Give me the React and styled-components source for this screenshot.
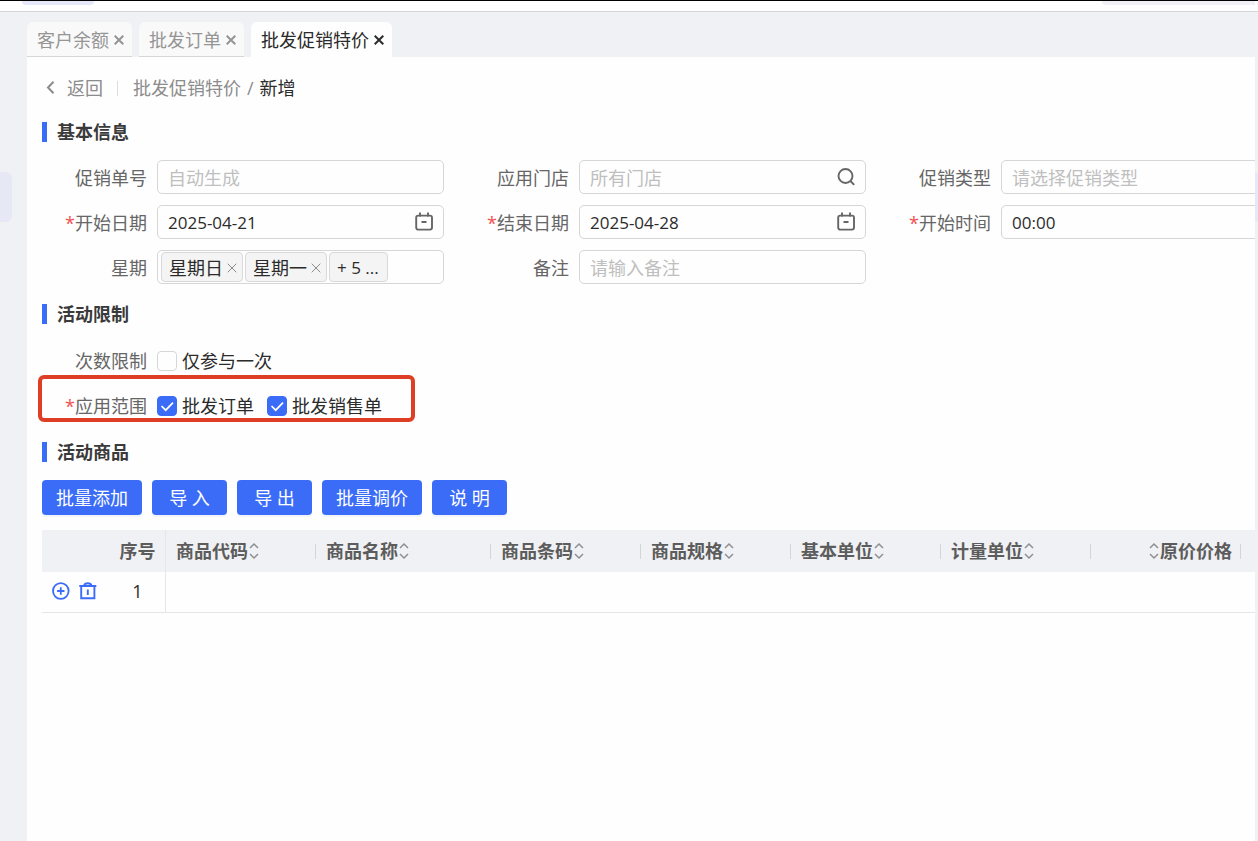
import React, { useState } from 'react';
import styled, { createGlobalStyle } from 'styled-components';

const GlobalStyle = createGlobalStyle`
    * {
        box-sizing: border-box;
    }
    body {
        margin: 0;
        overflow: hidden;
        background: #f0f1f4;
        color: #2b2b2b;
        font-family: 'Open Sans', 'Noto Sans CJK SC', sans-serif;
        font-size: 18px;
        line-height: 26px;
    }
    button, input, select {
        font: inherit;
        color: inherit;
    }
    svg {
        display: block;
        flex: none;
    }
`

const Page = styled.div`
    display: flex;
    flex-direction: column;
    height: 100vh;
`

const TopBar = styled.header`
    display: flex;
    justify-content: space-between;
    height: 12px;
    padding: 0 3px 0 22px;
    background: #fefefe;
    border-top: 1px solid #000;
    border-bottom: 1px solid #d5d6da;
`

const TopPill = styled.div`
    width: ${props => props.$width}px;
    height: 4px;
    background: ${props => props.$color};
    border-radius: ${props => props.$radius};
`

const Body = styled.div`
    display: flex;
    flex: 1;
    min-height: 0;
`

const Rail = styled.aside`
    flex: none;
    width: ${props => props.$width}px;
    padding-top: 160px;
`

const RailItem = styled.div`
    width: ${props => props.$width}px;
    height: 50px;
    background: #e6e8f6;
    border-radius: 0 6px 6px 0;
`

const Main = styled.main`
    display: flex;
    flex: 1;
    flex-direction: column;
    min-width: 0;
    overflow: hidden;
`

const Tabs = styled.nav`
    display: flex;
    gap: 7px;
    padding-top: 10px;
`

const Tab = styled.div`
    display: flex;
    align-items: center;
    gap: 5px;
    height: 35px;
    padding: 2px 8px 0 10px;
    border-radius: 6px 6px 0 0;
    border-bottom: 1px solid ${props => props.$active ? '#fefefe' : '#d5d6d9'};
    background: ${props => props.$active ? '#fefefe' : '#f9f9f9'};
    color: ${props => props.$active ? '#2b2b2b' : '#959595'};
`

const TabLink = styled.a`
    color: inherit;
    text-decoration: none;
`

const IconButton = styled.button`
    display: flex;
    padding: 0;
    border: none;
    background: none;
    color: ${props => props.$color || 'inherit'};
    cursor: pointer;
`

const Panel = styled.div`
    flex: 1;
    padding: 15px 0 0 15px;
    background: #fefefe;
`

const Breadcrumb = styled.nav`
    display: flex;
    align-items: center;
    height: 32px;
    color: #8c8c8c;
`

const BackLink = styled.a`
    display: flex;
    align-items: center;
    gap: 12px;
    padding: 0 14px 0 4px;
    color: inherit;
    text-decoration: none;
`

const Divider = styled.span`
    width: 1px;
    height: 15px;
    margin-right: 15px;
    background: #dcdcdc;
`

const Crumb = styled.a`
    color: inherit;
    text-decoration: none;
`

const Slash = styled.span`
    padding: 0 6px;
`

const Current = styled.span`
    color: #2b2b2b;
`

const SectionTitle = styled.h2`
    display: flex;
    align-items: center;
    gap: 10px;
    height: 26px;
    margin: ${props => props.$top}px 0 0;
    font-size: 18px;
    font-weight: 700;
    color: #3a3a3a;

    &::before {
        content: '';
        width: 5px;
        height: 20px;
        background: #3a6cf8;
    }
`

const Fields = styled.div`
    display: grid;
    grid-template-columns: repeat(3, minmax(402px, 1fr));
    gap: 11px 20px;
    margin-top: 15px;
`

const Field = styled.div`
    display: flex;
    align-items: center;
    height: 34px;
`

const Label = styled.label`
    flex: none;
    width: 115px;
    padding: 2px 10px 0 0;
    color: #666;
    text-align: right;
    white-space: nowrap;
`

const Star = styled.span`
    color: #f5504e;
`

const Box = styled.div`
    display: flex;
    align-items: center;
    flex: 1;
    gap: 2px;
    min-width: 0;
    height: 34px;
    padding: 0 ${props => props.$tags ? 3 : 10}px;
    border: 1px solid #d6d6d6;
    border-radius: 5px;
    color: #666;
`

const TextInput = styled.input`
    flex: 1;
    min-width: 0;
    padding: 2px 0 0;
    border: none;
    outline: none;
    background: none;
    color: #2b2b2b;
    font-size: ${props => props.$digits ? 17 : 18}px;

    &::placeholder {
        color: #bfbfbf;
    }
`

const Select = styled.select`
    flex: 1;
    min-width: 0;
    padding: 2px 0 0;
    border: none;
    outline: none;
    appearance: none;
    background: none;
    color: #bfbfbf;
`

const Tag = styled.span`
    display: flex;
    align-items: center;
    gap: 4px;
    height: 30px;
    padding: 2px ${props => props.$more ? 8 : 5}px 0 7px;
    border: 1px solid #d9d9d9;
    border-radius: 4px;
    background: #f4f4f4;
    color: #2b2b2b;
    font-size: ${props => props.$more ? 17 : 18}px;
    white-space: nowrap;
`

const Limits = styled.div`
    display: flex;
    flex-direction: column;
    gap: 11px;
    margin-top: 17px;
`

const CheckRow = styled.div`
    position: relative;
    display: flex;
    align-items: center;
    align-self: flex-start;
    height: 34px;
`

const Highlight = styled.div`
    position: absolute;
    top: -14px;
    right: -33px;
    bottom: 1px;
    left: -4px;
    border: 4px solid #de3f24;
    border-radius: 6px;
    pointer-events: none;
`

const GroupName = styled.span`
    flex: none;
    width: 115px;
    padding-right: 10px;
    color: #666;
    text-align: right;
`

const CheckLabel = styled.label`
    display: flex;
    align-items: center;
    gap: 5px;
    margin-right: 13px;

    &:last-of-type {
        margin-right: 0;
    }
`

const CheckWrap = styled.span`
    display: grid;
    width: 20px;
    height: 20px;

    > * {
        grid-area: 1 / 1;
    }
    > svg {
        pointer-events: none;
    }
`

const Checkbox = styled.input`
    width: 20px;
    height: 20px;
    margin: 0;
    appearance: none;
    border: 1px solid #d6d6d6;
    border-radius: 4px;
    background: #fefefe;

    &:checked {
        border-color: #3a6cf8;
        background: #3a6cf8;
    }
`

const Actions = styled.div`
    display: flex;
    gap: 10px;
    margin-top: 15px;
`

const ActionButton = styled.button`
    min-width: 75px;
    height: 35px;
    padding: 0 14px;
    border: none;
    border-radius: 4px;
    background: #3a6cf8;
    box-shadow: 0 2px 0 #f3f4f7;
    color: #fff;
    cursor: pointer;
`

const Table = styled.table`
    width: 100%;
    margin-top: 15px;
    table-layout: fixed;
    border-collapse: separate;
    border-spacing: 0;
`

const Th = styled.th`
    height: 42px;
    padding: 0;
    background: #f0f1f4;
    border-right: ${props => props.$line ? '1px solid #e6e6e8' : 'none'};
    color: #5c5c5c;
    font-weight: 700;
`

const HeadCell = styled.div`
    display: flex;
    align-items: center;
    justify-content: ${props => props.$end ? 'flex-end' : 'flex-start'};
    gap: 1px;
    padding-left: 10px;
    white-space: nowrap;

    &::after {
        content: '';
        width: 1px;
        height: 15px;
        margin-left: ${props => props.$end ? '7px' : 'auto'};
        background: #d5d5d7;
    }
`

const Td = styled.td`
    height: 41px;
    padding: 0 0 2px;
    border-bottom: 1px solid #e6e6e6;
    border-right: ${props => props.$line ? '1px solid #e6e6e8' : 'none'};
    text-align: center;
`

const RowTools = styled.div`
    display: flex;
    align-items: center;
    gap: 9px;
    padding-left: 10px;
`

function CloseIcon({ width = 1 }) {
    return (
        <svg width="10" height="10" viewBox="0 0 10 10" fill="none" stroke="currentColor" strokeWidth={width}>
            <path d="M0.7 0.7L9.3 9.3M9.3 0.7L0.7 9.3" />
        </svg>
    )
}

function BackIcon() {
    return (
        <svg width="9" height="14" viewBox="0 0 9 14" fill="none" stroke="currentColor" strokeWidth="2">
            <path d="M7.5 0.8L2 6.5L7.5 12.2" />
        </svg>
    )
}

function SearchIcon() {
    return (
        <svg width="18" height="18" viewBox="0 0 18 18" fill="none" stroke="currentColor" strokeWidth="1.9">
            <circle cx="8.5" cy="8" r="7" />
            <path d="M13.4 13L17.2 16.8" />
        </svg>
    )
}

function CalendarIcon() {
    return (
        <svg width="18" height="20" viewBox="0 0 18 20" fill="none" stroke="currentColor" strokeWidth="1.9">
            <rect x="1.2" y="3.6" width="15.8" height="14" rx="2" />
            <path d="M5 0.5V4.5M13 0.5V4.5M6.5 10H11.5" />
        </svg>
    )
}

function CheckIcon() {
    return (
        <svg width="20" height="20" viewBox="0 0 20 20" fill="none" stroke="#fff" strokeWidth="1.7">
            <path d="M4.5 10L8.7 14.2L16 6.6" />
        </svg>
    )
}

function SortIcon() {
    return (
        <svg width="10" height="18" viewBox="0 0 10 18" fill="none" stroke="#8f8f8f" strokeWidth="1.5">
            <path d="M1 6L5 2L9 6M1 12L5 16L9 12" />
        </svg>
    )
}

function PlusIcon() {
    return (
        <svg width="18" height="18" viewBox="0 0 18 18" fill="none" stroke="currentColor" strokeWidth="1.8">
            <circle cx="8.8" cy="9" r="7.8" />
            <path d="M8.8 5.3V12.7M5.1 9H12.5" />
        </svg>
    )
}

function TrashIcon() {
    return (
        <svg width="18" height="18" viewBox="0 0 18 18" fill="none" stroke="currentColor" strokeWidth="1.9">
            <path d="M0.3 4H17.3M2.2 4V16.3H15.4V4M5.1 3.8C5.8 0.4 11.8 0.4 12.5 3.8M8.8 7.5V13" />
        </svg>
    )
}

const tabs = ['客户余额', '批发订单', '批发促销特价']
const weekdays = ['星期日', '星期一']
const actions = ['批量添加', '导 入', '导 出', '批量调价', '说 明']
const columns = [
    { name: '商品代码', width: 150 },
    { name: '商品名称', width: 175 },
    { name: '商品条码', width: 150 },
    { name: '商品规格', width: 150 },
    { name: '基本单位', width: 150 },
    { name: '计量单位', width: 150 },
    { name: '原价价格', width: 150, end: true },
]

function TextField({ id, label, required, icon, digits, ...rest }) {
    return (
        <Field>
            <Label htmlFor={id}>{required && <Star>*</Star>}{label}</Label>
            <Box>
                <TextInput id={id} type="text" $digits={digits} {...rest} />
                {icon}
            </Box>
        </Field>
    )
}

function Check({ label, defaultChecked = false }) {
    const [checked, setChecked] = useState(defaultChecked)
    return (
        <CheckLabel>
            <CheckWrap>
                <Checkbox type="checkbox" checked={checked} onChange={e => setChecked(e.target.checked)} />
                {checked && <CheckIcon />}
            </CheckWrap>
            {label}
        </CheckLabel>
    )
}

function App() {
    return (
        <Page>
            <GlobalStyle />
            <TopBar>
                <TopPill $width={72} $color="#e6e8f9" $radius="0 0 4px 4px" />
                <TopPill $width={153} $color="#f0f0f6" $radius="0 0 0 4px" />
            </TopBar>
            <Body>
                <Rail $width={27}><RailItem $width={12} /></Rail>
                <Main>
                    <Tabs>
                        {tabs.map((name, i) => (
                            <Tab key={name} $active={i === 2}>
                                <TabLink href="#">{name}</TabLink>
                                <IconButton type="button" aria-label="关闭"><CloseIcon width={2} /></IconButton>
                            </Tab>
                        ))}
                    </Tabs>
                    <Panel>
                        <Breadcrumb>
                            <BackLink href="#"><BackIcon />返回</BackLink>
                            <Divider />
                            <Crumb href="#">批发促销特价</Crumb>
                            <Slash>/</Slash>
                            <Current>新增</Current>
                        </Breadcrumb>

                        <SectionTitle $top={15}>基本信息</SectionTitle>
                        <Fields>
                            <TextField id="orderNo" label="促销单号" placeholder="自动生成" />
                            <TextField id="store" label="应用门店" placeholder="所有门店" icon={<SearchIcon />} />
                            <Field>
                                <Label htmlFor="type">促销类型</Label>
                                <Box>
                                    <Select id="type" defaultValue="">
                                        <option value="">请选择促销类型</option>
                                    </Select>
                                </Box>
                            </Field>
                            <TextField id="startDate" label="开始日期" required digits defaultValue="2025-04-21" icon={<CalendarIcon />} />
                            <TextField id="endDate" label="结束日期" required digits defaultValue="2025-04-28" icon={<CalendarIcon />} />
                            <TextField id="startTime" label="开始时间" required digits defaultValue="00:00" />
                            <Field>
                                <Label htmlFor="week">星期</Label>
                                <Box $tags>
                                    {weekdays.map(day => (
                                        <Tag key={day}>
                                            {day}
                                            <IconButton type="button" aria-label="移除" $color="#8c8c8c"><CloseIcon /></IconButton>
                                        </Tag>
                                    ))}
                                    <Tag $more>+ 5 ...</Tag>
                                    <TextInput id="week" type="text" />
                                </Box>
                            </Field>
                            <TextField id="remark" label="备注" placeholder="请输入备注" />
                        </Fields>

                        <SectionTitle $top={17}>活动限制</SectionTitle>
                        <Limits>
                            <CheckRow role="group" aria-labelledby="times">
                                <GroupName id="times">次数限制</GroupName>
                                <Check label="仅参与一次" />
                            </CheckRow>
                            <CheckRow role="group" aria-labelledby="scope">
                                <GroupName id="scope"><Star>*</Star>应用范围</GroupName>
                                <Check label="批发订单" defaultChecked />
                                <Check label="批发销售单" defaultChecked />
                                <Highlight />
                            </CheckRow>
                        </Limits>

                        <SectionTitle $top={16}>活动商品</SectionTitle>
                        <Actions>
                            {actions.map(name => <ActionButton key={name} type="button">{name}</ActionButton>)}
                        </Actions>
                        <Table>
                            <colgroup>
                                <col width="68" />
                                <col width="56" />
                                {columns.map(col => <col key={col.name} width={col.width} />)}
                                <col />
                            </colgroup>
                            <thead>
                                <tr>
                                    <Th />
                                    <Th $line>序号</Th>
                                    {columns.map(col => (
                                        <Th key={col.name}>
                                            <HeadCell $end={col.end}>
                                                {col.end && <SortIcon />}
                                                {col.name}
                                                {!col.end && <SortIcon />}
                                            </HeadCell>
                                        </Th>
                                    ))}
                                    <Th />
                                </tr>
                            </thead>
                            <tbody>
                                <tr>
                                    <Td>
                                        <RowTools>
                                            <IconButton type="button" aria-label="添加" $color="#3a6cf8"><PlusIcon /></IconButton>
                                            <IconButton type="button" aria-label="删除" $color="#3a6cf8"><TrashIcon /></IconButton>
                                        </RowTools>
                                    </Td>
                                    <Td $line>1</Td>
                                    {columns.map(col => <Td key={col.name} />)}
                                    <Td />
                                </tr>
                            </tbody>
                        </Table>
                    </Panel>
                </Main>
                <Rail $width={3}><RailItem $width={3} /></Rail>
            </Body>
        </Page>
    )
}

export default App;
